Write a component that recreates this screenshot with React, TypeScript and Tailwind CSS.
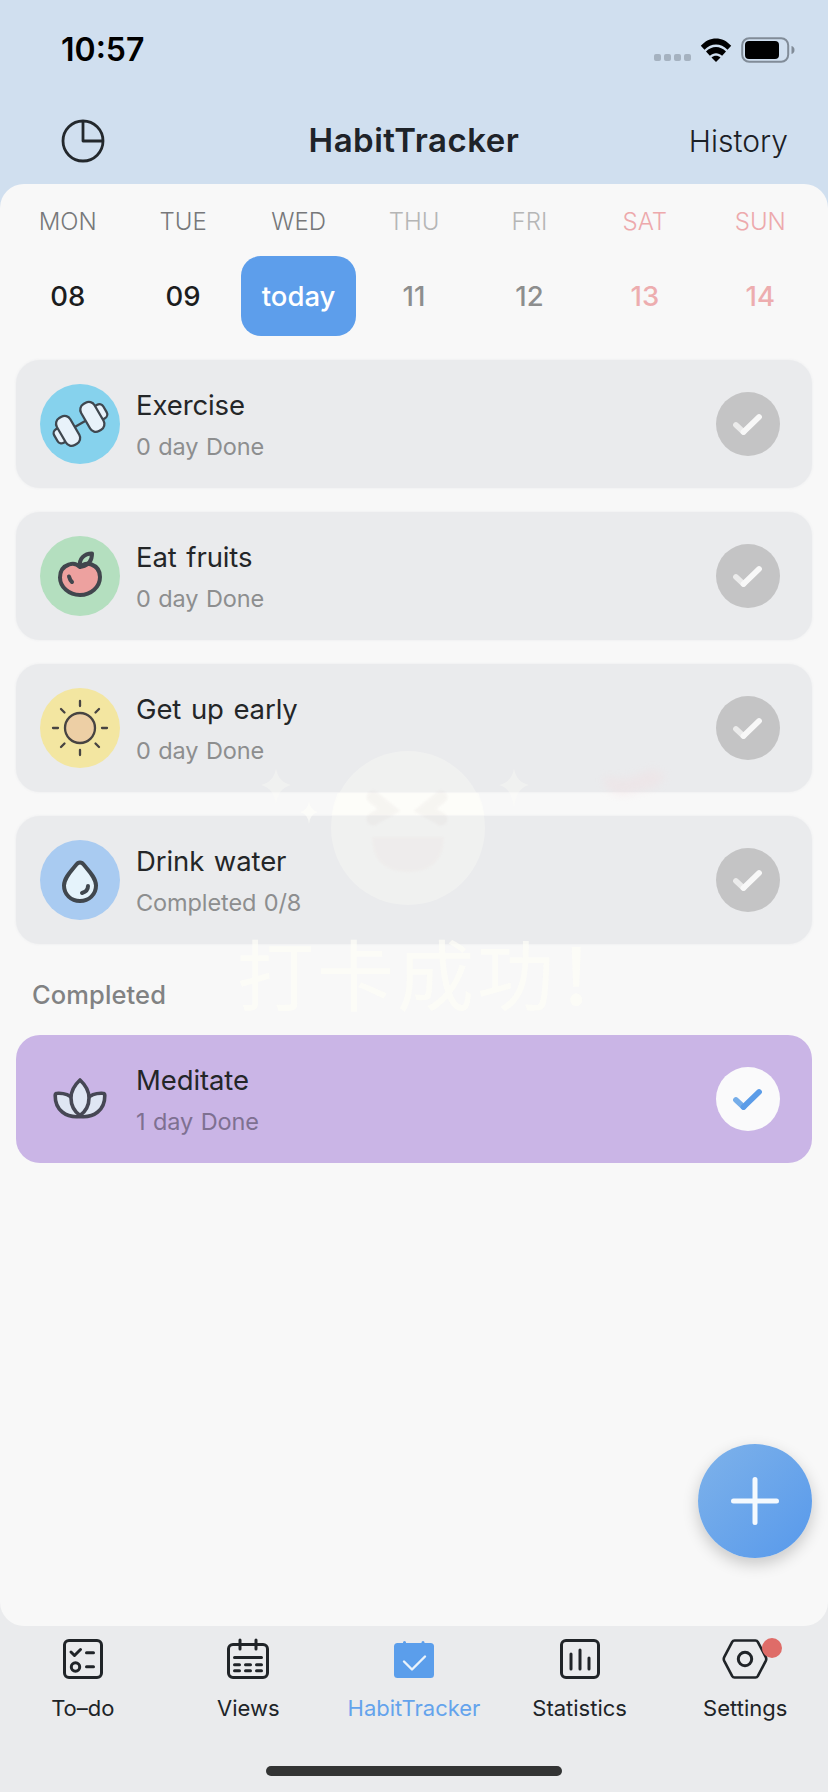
import type { ReactNode } from "react";
import clsx from "clsx";

interface Day {
  name: string;
  date: string;
  nameColor: string;
  dateColor: string;
  today?: boolean;
}

interface Habit {
  title: string;
  note: string;
  color: string;
  icon: ReactNode;
  done?: boolean;
}

interface Tab {
  label: string;
  icon: ReactNode;
  active?: boolean;
  badge?: boolean;
}

const days: Day[] = [
  { name: "MON", date: "08", nameColor: "text-[#77787a]", dateColor: "text-[#1c1d1e]" },
  { name: "TUE", date: "09", nameColor: "text-[#77787a]", dateColor: "text-[#1c1d1e]" },
  { name: "WED", date: "today", nameColor: "text-[#77787a]", dateColor: "text-white", today: true },
  { name: "THU", date: "11", nameColor: "text-[#b5b6b6]", dateColor: "text-[#8d8e8e]" },
  { name: "FRI", date: "12", nameColor: "text-[#b5b6b6]", dateColor: "text-[#8d8e8e]" },
  { name: "SAT", date: "13", nameColor: "text-[#eda9ac]", dateColor: "text-[#edadaf]" },
  { name: "SUN", date: "14", nameColor: "text-[#eda9ac]", dateColor: "text-[#edadaf]" },
];

const DumbbellIcon = () => (
  <svg viewBox="0 0 80 80" className="size-20" fill="#e8f2fa" stroke="#3f474f" strokeWidth="2.300">
    <g transform="rotate(-30 40 40)">
      <path d="M33 40h14" />
      <rect x="12" y="32.500" width="11" height="15.500" rx="4.500" />
      <rect x="58" y="32" width="11" height="15.500" rx="4.500" />
      <rect x="18.500" y="24.500" width="15.500" height="31" rx="6.500" />
      <rect x="46.500" y="24.500" width="15.500" height="31" rx="6.500" />
    </g>
  </svg>
);

const AppleIcon = () => (
  <svg
    viewBox="0 0 80 80"
    className="size-20"
    fill="none"
    stroke="#41464d"
    strokeWidth="4"
    strokeLinecap="round"
    strokeLinejoin="round"
  >
    <path
      fill="#eda19f"
      d="M40 31c-3-3-7-4-11-2.500-6 2-9 7-9 13C20 51 29 59 40 59s20-8 20-18c0-6-3-10.500-8.500-12.500C47.500 27 43 28 40 31Z"
    />
    <path d="M40 30c-1-7 4-12.500 12-12.500 0 7-3 11.500-10 13" />
    <path d="M29 40.500c.5 2 1.500 4 3 5.500" />
  </svg>
);

const SunIcon = () => (
  <svg viewBox="0 0 80 80" className="size-20" fill="none" stroke="#474442" strokeWidth="2.300" strokeLinecap="round">
    <circle cx="40" cy="40" r="15" fill="#edcfa5" />
    <path d="M40 13v5M40 62v5M13 40h5M62 40h5M21 21l3.500 3.500M55.500 55.500l3.500 3.500M59 21l-3.500 3.500M24.500 55.500 21 59" />
  </svg>
);

const DropIcon = () => (
  <svg
    viewBox="0 0 80 80"
    className="size-20"
    fill="none"
    stroke="#40474e"
    strokeWidth="4"
    strokeLinecap="round"
    strokeLinejoin="round"
  >
    <path
      fill="#e5f3fb"
      d="M40 22.500c-1.500 0-3 1-4 2.500-5 6-12 13-12 20.500C24 54.500 31 61 40 61s16-6.500 16-15.500C56 38 49 31 44 25c-1-1.500-2.500-2.500-4-2.500Z"
    />
    <path d="M48 46c0 3.500-2.500 6-6 7" />
  </svg>
);

const LotusIcon = () => (
  <svg viewBox="0 0 80 80" className="size-20" fill="#dfe6f3" stroke="#464754" strokeWidth="3.600" strokeLinejoin="round">
    <path d="M40 57.500c-14 1.500-25-6.500-24.800-21 0-1.500.8-2.200 2.300-2.200 6-.3 12 1.700 16 5.700Z" />
    <path d="M40 57.500c14 1.500 25-6.500 24.800-21 0-1.500-.8-2.200-2.300-2.200-6-.3-12 1.700-16 5.700Z" />
    <path d="M40 21c-6 5.500-9 11-9 18 0 7.500 3.500 13.500 9 17.500 5.500-4 9-10 9-17.500C49 32 46 26.500 40 21Z" />
  </svg>
);

const habits: Habit[] = [
  { title: "Exercise", note: "0 day Done", color: "bg-[#86d2ed]", icon: <DumbbellIcon /> },
  { title: "Eat fruits", note: "0 day Done", color: "bg-[#b4dfbf]", icon: <AppleIcon /> },
  { title: "Get up early", note: "0 day Done", color: "bg-[#f3e6a1]", icon: <SunIcon /> },
  { title: "Drink water", note: "Completed 0/8", color: "bg-[#a9cbf1]", icon: <DropIcon /> },
];

const completed: Habit[] = [
  { title: "Meditate", note: "1 day Done", color: "bg-transparent", icon: <LotusIcon />, done: true },
];

const tabs: Tab[] = [
  {
    label: "To–do",
    icon: (
      <>
        <rect x="5.500" y="5.500" width="37" height="37" rx="4.500" />
        <path d="m12 17 3.500 3.500 6-6M27.500 17.800h7M27.500 31.800h7" />
        <circle cx="16.500" cy="32" r="4.200" />
      </>
    ),
  },
  {
    label: "Views",
    icon: (
      <>
        <rect x="4.500" y="9.500" width="39" height="33" rx="4.500" />
        <path d="M16 5v9M32 5v9M10.500 22.500h27" />
        <path d="M10.500 29.700h5M21.500 29.700h5M32.500 29.700h5M10.500 35.700h5M21.500 35.700h5M32.500 35.700h5" />
      </>
    ),
  },
  {
    label: "HabitTracker",
    active: true,
    icon: (
      <>
        <rect x="4" y="8" width="40" height="35" rx="3.500" fill="#5b9eeb" stroke="none" />
        <path d="M14.500 7.500v2M33 7.500v2" stroke="#5b9eeb" />
        <path d="m14 26.500 8 8L35 21.500" stroke="#eaf3fb" strokeWidth="2.400" />
      </>
    ),
  },
  {
    label: "Statistics",
    icon: (
      <>
        <rect x="5.500" y="5.500" width="37" height="37" rx="4.500" />
        <path d="M15 19v15M24 15v19M33 23v11" />
      </>
    ),
  },
  {
    label: "Settings",
    badge: true,
    icon: (
      <>
        <path
          strokeWidth="2.600"
          d="M13.500 5.500h21q1.500 0 2.300 1.400l8 15.200q.9 1.900 0 3.800l-8 15.200q-.8 1.400-2.300 1.400h-21q-1.500 0-2.300-1.400l-8-15.200q-.9-1.900 0-3.800l8-15.200Q12 5.500 13.500 5.500Z"
        />
        <circle cx="24" cy="24" r="6.700" />
      </>
    ),
  },
];

const StatusBar = () => (
  <div className="flex h-[99px] items-center justify-between pr-[33px] pl-[61px]">
    <span className="pt-px text-[32px] leading-none font-semibold text-black">10:57</span>
    <div className="flex items-center">
      <div className="mt-4 mr-[9px] flex gap-[3px]">
        {[0, 1, 2, 3].map((dot) => (
          <span key={dot} className="h-[7px] w-[7px] rounded-[2px] bg-[#a5b2c0]" />
        ))}
      </div>
      <svg viewBox="0 0 32 24" className="mr-[9px] h-6 w-8">
        <path d="M.8 7.800C9.300-2 22.700-2 31.200 7.800l-3.700 4C21 4.800 11 4.800 4.500 11.800Z" />
        <path d="M6 13.600c5.700-6 14.300-6 20 0l-3.900 4.100c-3.500-3.400-8.700-3.400-12.200 0Z" />
        <path d="M11.500 19.400c2.600-2.200 6.400-2.200 9 0L16 24Z" />
      </svg>
      <svg viewBox="0 0 54 26" className="h-[26px] w-[54px]">
        <rect x="1.200" y="1.200" width="46" height="23.600" rx="7" fill="none" stroke="#818c98" strokeWidth="2" />
        <rect x="4" y="4" width="34" height="18" rx="4" />
        <path d="M50.500 9v8c2-.6 3-2 3-4s-1-3.400-3-4Z" fill="#818c98" />
      </svg>
    </div>
  </div>
);

const Header = () => (
  <div className="grid h-[85px] grid-cols-3 items-center pr-10 pb-[2px] pl-[61px]">
    <svg viewBox="0 0 44 44" className="size-11" fill="none" stroke="#23282c" strokeWidth="2.800" strokeLinejoin="round">
      <circle cx="22" cy="22" r="20" />
      <path d="M22 2v20h20" />
    </svg>
    <h1 className="-ml-[21px] text-center text-[33px] leading-none font-semibold tracking-[0.500px] text-[#1e2329]">
      HabitTracker
    </h1>
    <span className="text-right text-[30px] leading-none font-light text-[#1b2026]">History</span>
  </div>
);

const WeekStrip = () => (
  <div className="grid grid-cols-7 px-2.5 pt-[25px]">
    {days.map((day) => (
      <div key={day.name} className="flex flex-col items-center">
        <span className={clsx("h-[47px] text-2xl leading-[26px] font-light", day.nameColor)}>{day.name}</span>
        <div
          className={clsx(
            "flex h-20 w-full items-center justify-center rounded-[20px] pt-px text-[27.500px] font-medium",
            day.dateColor,
            day.today && "bg-[#5d9eeb]",
          )}
        >
          {day.date}
        </div>
      </div>
    ))}
  </div>
);

const CheckButton = ({ done }: { done?: boolean }) => (
  <button
    className={clsx("flex size-16 items-center justify-center rounded-full", done ? "bg-[#fafafb]" : "bg-[#c4c4c5]")}
  >
    <svg viewBox="0 0 64 64" className="size-16" fill="none" strokeWidth="5.800" strokeLinecap="round">
      <path d="m20 33 7.500 7" stroke={done ? "#75ade9" : "#ebebeb"} />
      <path d="M27.500 40 43 25" stroke={done ? "#5b9ce8" : "#f8f8f8"} />
    </svg>
  </button>
);

const HabitCard = ({ habit }: { habit: Habit }) => (
  <div
    className={clsx(
      "flex h-32 items-center rounded-3xl px-6 pr-8",
      habit.done ? "bg-[#cab5e6]" : "bg-[#eaebed] shadow-[0_0_3px_#eaebed]",
    )}
  >
    <div className={clsx("size-20 rounded-full", habit.color)}>{habit.icon}</div>
    <div className="ml-4 flex-1 pt-0.5">
      <p className="text-[27.500px] leading-[36px] tracking-[-0.1px] [word-spacing:2px] text-[#242628]">
        {habit.title}
      </p>
      <p
        className={clsx(
          "mt-2 text-[23.500px] leading-[32px] tracking-[-0.1px] [word-spacing:1px]",
          habit.done ? "text-[#7e7091]" : "text-[#8d8e8f]",
        )}
      >
        {habit.note}
      </p>
    </div>
    <CheckButton done={habit.done} />
  </div>
);

// Check-in toast at the end of its fade out
const FadingToast = () => (
  <div className="pointer-events-none absolute inset-x-0 top-[560px]">
    <svg viewBox="0 0 828 480" className="h-[480px] w-full">
      <g fill="#fffffa">
        <circle cx="408" cy="84" r="77" opacity=".3" />
        <path d="M337.500 49h141q4.500 11 6 22h-153q1.500-11 6-22Z" opacity=".5" />
        <path d="M276 24q2 14 15 17-13 3-15 20-2-17-15-20 13-3 15-17Z" opacity=".3" />
        <path d="M514 24q2 14 15 17-13 3-15 24-2-21-15-24 13-3 15-17Z" opacity=".3" />
        <path d="M309 57q1 9 9 11-8 2-9 12-1-10-9-12 8-2 9-11Z" opacity=".6" />
      </g>
      <g className="blur-[1px]" fill="none" stroke="#cfc4c4" strokeWidth="13" strokeLinecap="round" opacity=".13">
        <path d="m373 53 16 13-16 9M441 53l-16 13 16 9" />
      </g>
      <path className="blur-[1px]" d="M372 93h72q0 35-36 35t-36-35Z" fill="#e8d8d8" opacity=".16" />
      <path className="blur-[4px]" d="M603 33l24 2 26-10 13 6-10 12-34 9q-18-4-19-19Z" fill="#f5d9dc" opacity=".28" />
    </svg>
  </div>
);

const ToastText = () => (
  <p className="pointer-events-none absolute inset-x-0 top-[744px] pl-[237px] font-['Noto_Sans_CJK_SC',sans-serif] text-[77px] leading-[88px] tracking-[3px] whitespace-nowrap text-[#fefdf6]/70">
    打卡成功<span className="ml-1.5 font-medium">!</span>
  </p>
);

const AddButton = () => (
  <button className="flex size-[114px] items-center justify-center rounded-full bg-linear-to-br from-[#7eb2ea] to-[#5799eb] shadow-[0_6px_16px_rgba(0,0,0,0.2)]">
    <svg viewBox="0 0 48 48" className="size-12" stroke="#f4f9fe" strokeWidth="5" strokeLinecap="round">
      <path d="M24 2.500v43M2.500 24h43" />
    </svg>
  </button>
);

const TabBar = () => (
  <nav className="grid h-[140px] grid-cols-5 pt-[9px]">
    {tabs.map((tab) => (
      <div
        key={tab.label}
        className={clsx("flex flex-col items-center", tab.active ? "text-[#64a3ec]" : "text-[#202428]")}
      >
        <div className="relative">
          <svg
            viewBox="0 0 48 48"
            className="size-12"
            fill="none"
            stroke="currentColor"
            strokeWidth="3"
            strokeLinecap="round"
            strokeLinejoin="round"
          >
            {tab.icon}
          </svg>
          {tab.badge && <span className="absolute top-[3px] -right-[13px] size-5 rounded-full bg-[#df6c68]" />}
        </div>
        <span className="mt-3 text-[22px] leading-[26px]">{tab.label}</span>
      </div>
    ))}
  </nav>
);

const App = () => {
  return (
    <div className="flex h-[1792px] w-[828px] flex-col overflow-hidden bg-[#eaebed] font-[Inter,'Liberation_Sans',sans-serif]">
      <div className="bg-[#d0dfef]">
        <StatusBar />
        <Header />
        <div className="h-6" />
      </div>

      <main className="relative -mt-6 flex h-[1442px] flex-col rounded-3xl bg-[#f8f8f8]">
        <WeekStrip />
        <div className="mt-6 flex flex-col gap-6 px-4">
          {habits.map((habit) => (
            <HabitCard key={habit.title} habit={habit} />
          ))}
        </div>
        <h2 className="mt-[34px] pl-8 text-[25.500px] leading-[34px] font-medium tracking-[0.1px] text-[#818283]">
          Completed
        </h2>
        <div className="mt-[23px] px-4">
          {completed.map((habit) => (
            <HabitCard key={habit.title} habit={habit} />
          ))}
        </div>
        <div className="mt-auto mb-[68px] flex justify-end pr-4">
          <AddButton />
        </div>
        <FadingToast />
        <ToastText />
      </main>

      <TabBar />
      <div className="mx-auto h-[10px] w-[296px] rounded-full bg-[#333434]" />
    </div>
  );
};

export default App;
